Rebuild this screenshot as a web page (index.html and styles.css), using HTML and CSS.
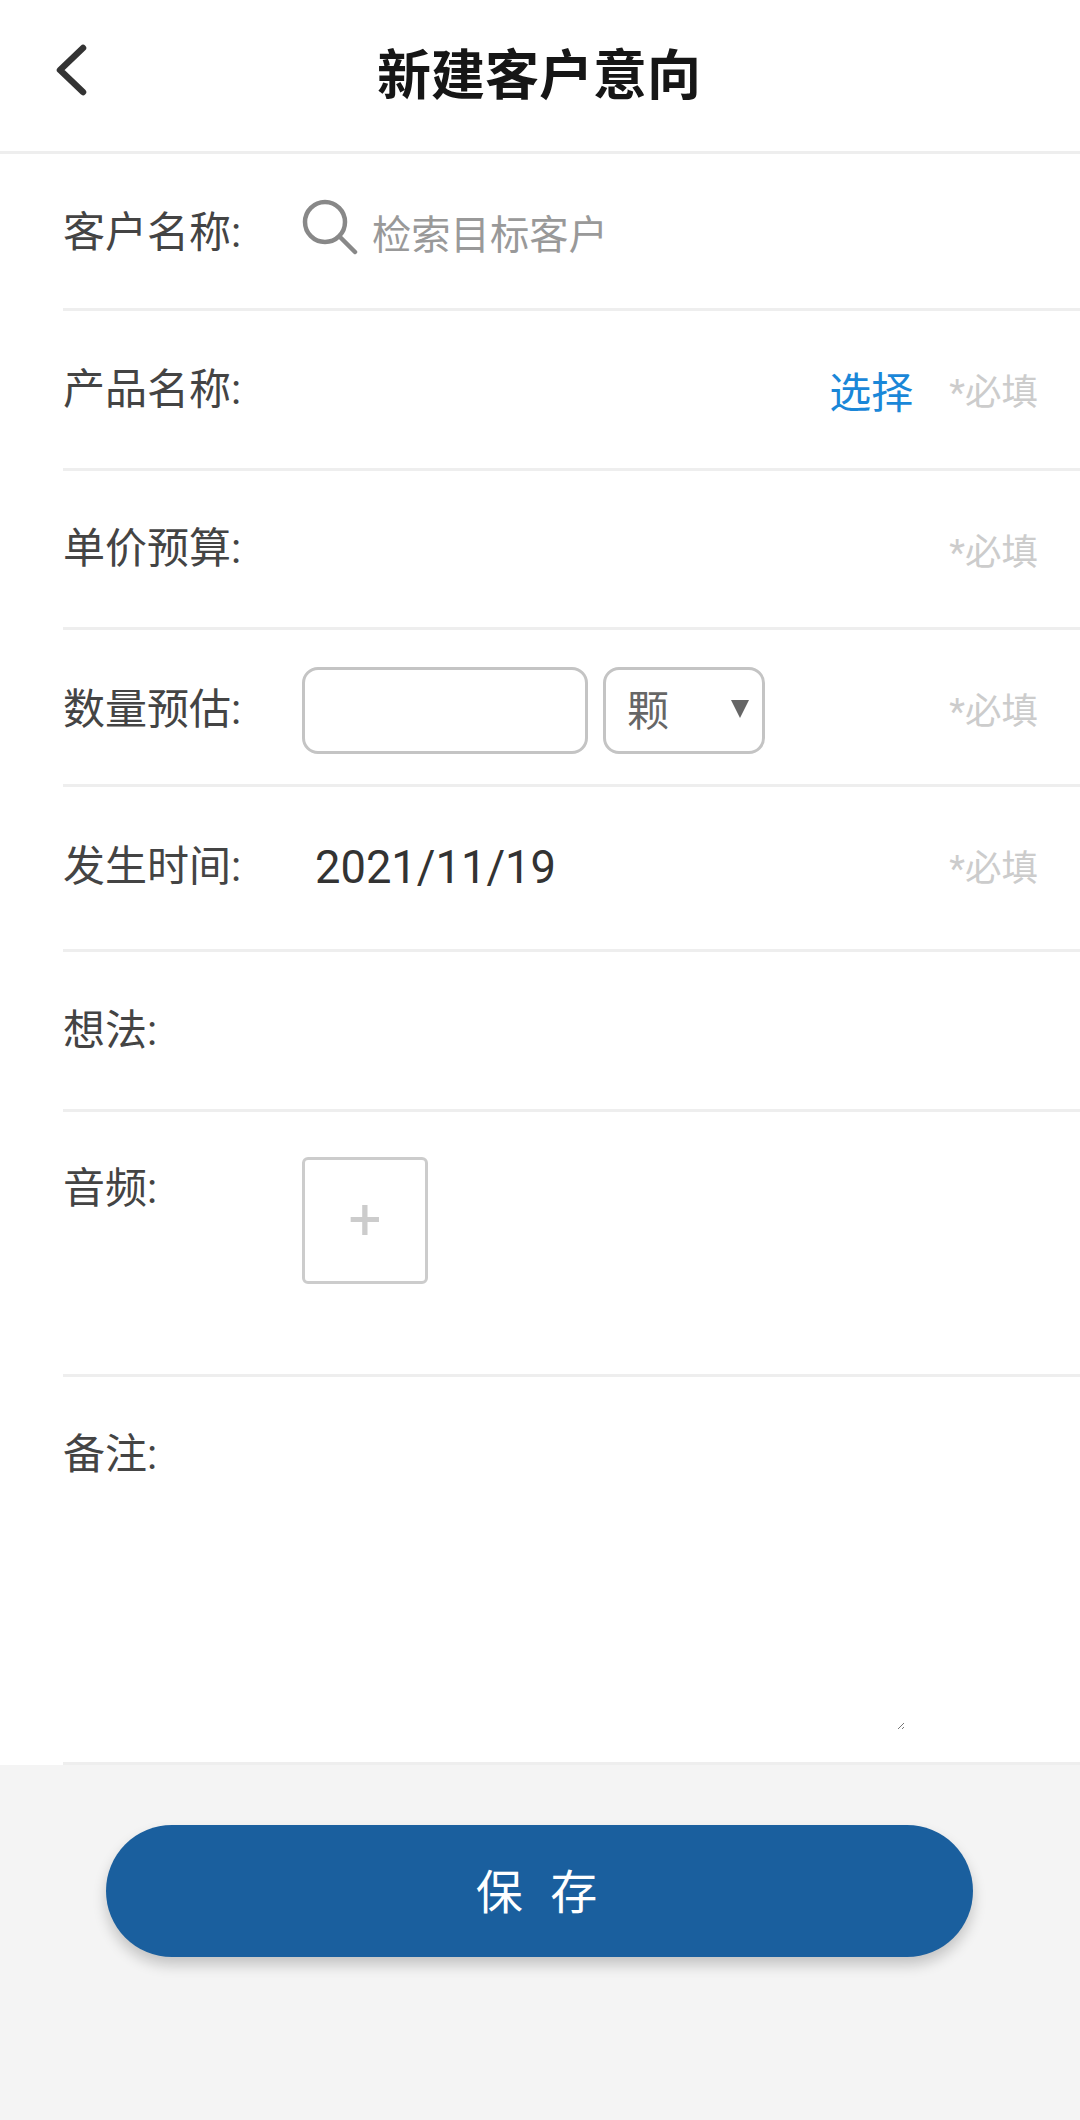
FILE: index.html
```html
<!DOCTYPE html>
<html lang="zh-CN">
<head>
<meta charset="utf-8">
<title>新建客户意向</title>
<link rel="stylesheet" href="styles.css">
</head>
<body>
<div class="sheet">
  <header class="topbar">
    <svg class="back" width="36" height="56" viewBox="0 0 36 56"><path d="M31 6 L8 28 L31 50" fill="none" stroke="#333" stroke-width="6.5" stroke-linecap="round" stroke-linejoin="round"/></svg>
    <h1 class="title">新建客户意向</h1>
  </header>
  <div class="row r-name">
    <span class="label">客户名称:</span>
    <div class="field search">
      <svg class="search-icon" width="56" height="56" viewBox="0 0 56 56"><circle cx="23" cy="23" r="20" fill="none" stroke="#888" stroke-width="4.5"/><path d="M38 38 L53 53" stroke="#888" stroke-width="4.5" stroke-linecap="round"/></svg>
      <span class="placeholder">检索目标客户</span>
    </div>
  </div>
  <div class="row r-product">
    <span class="label">产品名称:</span>
    <div class="field"></div>
    <span class="link">选择</span>
    <span class="req">*必填</span>
  </div>
  <div class="row r-price">
    <span class="label">单价预算:</span>
    <div class="field"></div>
    <span class="req">*必填</span>
  </div>
  <div class="row r-qty">
    <span class="label">数量预估:</span>
    <div class="field qty">
      <div class="input"></div>
      <div class="select"><span class="unit">颗</span><i class="caret"></i></div>
    </div>
    <span class="req">*必填</span>
  </div>
  <div class="row r-date">
    <span class="label">发生时间:</span>
    <div class="field date">2021/11/19</div>
    <span class="req">*必填</span>
  </div>
  <div class="row r-idea">
    <span class="label">想法:</span>
  </div>
  <div class="row r-audio">
    <span class="label">音频:</span>
    <div class="field"><div class="upload">+</div></div>
  </div>
  <div class="row r-notes">
    <span class="label">备注:</span>
    <svg class="grip" width="8" height="8" viewBox="0 0 8 8"><path d="M1 7 L7 1 M5 7 L7 5" stroke="#777" stroke-width="1"/></svg>
  </div>
</div>
<div class="actions">
  <button class="save">保 存</button>
</div>
</body>
</html>
```
FILE: styles.css
```css
* { box-sizing: border-box; }
html, body { margin: 0; padding: 0; }
body {
  width: 1080px;
  height: 2120px;
  background: #f4f4f4;
  font-family: Roboto, "Noto Sans CJK SC", sans-serif;
  overflow: hidden;
}
.sheet { background: #fff; height: 1765px; }
.topbar {
  height: 154px;
  border-bottom: 3px solid #eeeeee;
  position: relative;
  display: flex;
  align-items: center;
  justify-content: center;
}
.back { position: absolute; left: 52px; top: 42px; }
.title {
  margin: 2px 2px 0 0;
  font-size: 54px;
  font-weight: 700;
  color: #161616;
  line-height: 1;
}
.row {
  margin-left: 63px;
  border-bottom: 3px solid #eeeeee;
  display: flex;
  align-items: center;
  padding-right: 42px;
}
.r-name { height: 157px; }
.r-name .label { margin-top: 4px; }
.r-product { height: 160px; }
.r-price { height: 159px; }
.r-qty { height: 157px; padding-top: 6px; }
.r-qty .req { margin-bottom: 4px; }
.r-date { height: 165px; padding-bottom: 3px; }
.r-date .req { margin-bottom: 2px; }
.r-idea { height: 160px; }
.r-audio { height: 265px; padding-top: 45px; align-items: flex-start; }
.r-audio .label { margin-top: 8px; }
.r-notes { height: 388px; padding-top: 54px; align-items: flex-start; position: relative; }
.label {
  width: 239px;
  flex: none;
  font-size: 42px;
  line-height: 48px;
  color: #444;
}
.field { flex: 1; display: flex; align-items: center; }
.search { gap: 14px; }
.search-icon { flex: none; margin-bottom: 9px; }
.placeholder { font-size: 39.3px; color: #999; }
.link { font-size: 42px; color: #1a87d8; margin-right: 36px; margin-bottom: 1px; }
.req { font-size: 36.5px; color: #ccc; }
.qty { gap: 15px; }
.input {
  width: 286px;
  height: 87px;
  border: 3px solid #c4c4c4;
  border-radius: 16px;
}
.select {
  width: 162px;
  height: 87px;
  border: 3px solid #c4c4c4;
  border-radius: 16px;
  display: flex;
  align-items: center;
  justify-content: space-between;
  padding: 0 13px 0 21px;
  font-size: 42px;
  color: #666;
}
.unit { margin-bottom: 6px; }
.caret {
  width: 0;
  height: 0;
  border-left: 9px solid transparent;
  border-right: 9px solid transparent;
  border-top: 18px solid #666;
  margin-bottom: 2px;
}
.date { font-size: 45.3px; color: #333; padding-left: 13px; margin-top: 2px; }
.upload {
  width: 126px;
  height: 127px;
  border: 3px solid #ccc;
  border-radius: 6px;
  display: flex;
  align-items: center;
  justify-content: center;
  font-size: 58px;
  font-weight: 400;
  color: #ccc;
  padding-bottom: 3px;
}
.grip { position: absolute; left: 834px; top: 345px; }
.actions { padding: 60px 106px 0; }
.save {
  display: block;
  width: 867px;
  height: 132px;
  border: 0;
  padding: 0 4px 6px 0;
  border-radius: 66px;
  background: #1a5f9e;
  box-shadow: 0 8px 14px rgba(0,0,0,.2);
  color: #fff;
  font-family: inherit;
  font-size: 47px;
  letter-spacing: 2px;
  word-spacing: 12px;
}
```
